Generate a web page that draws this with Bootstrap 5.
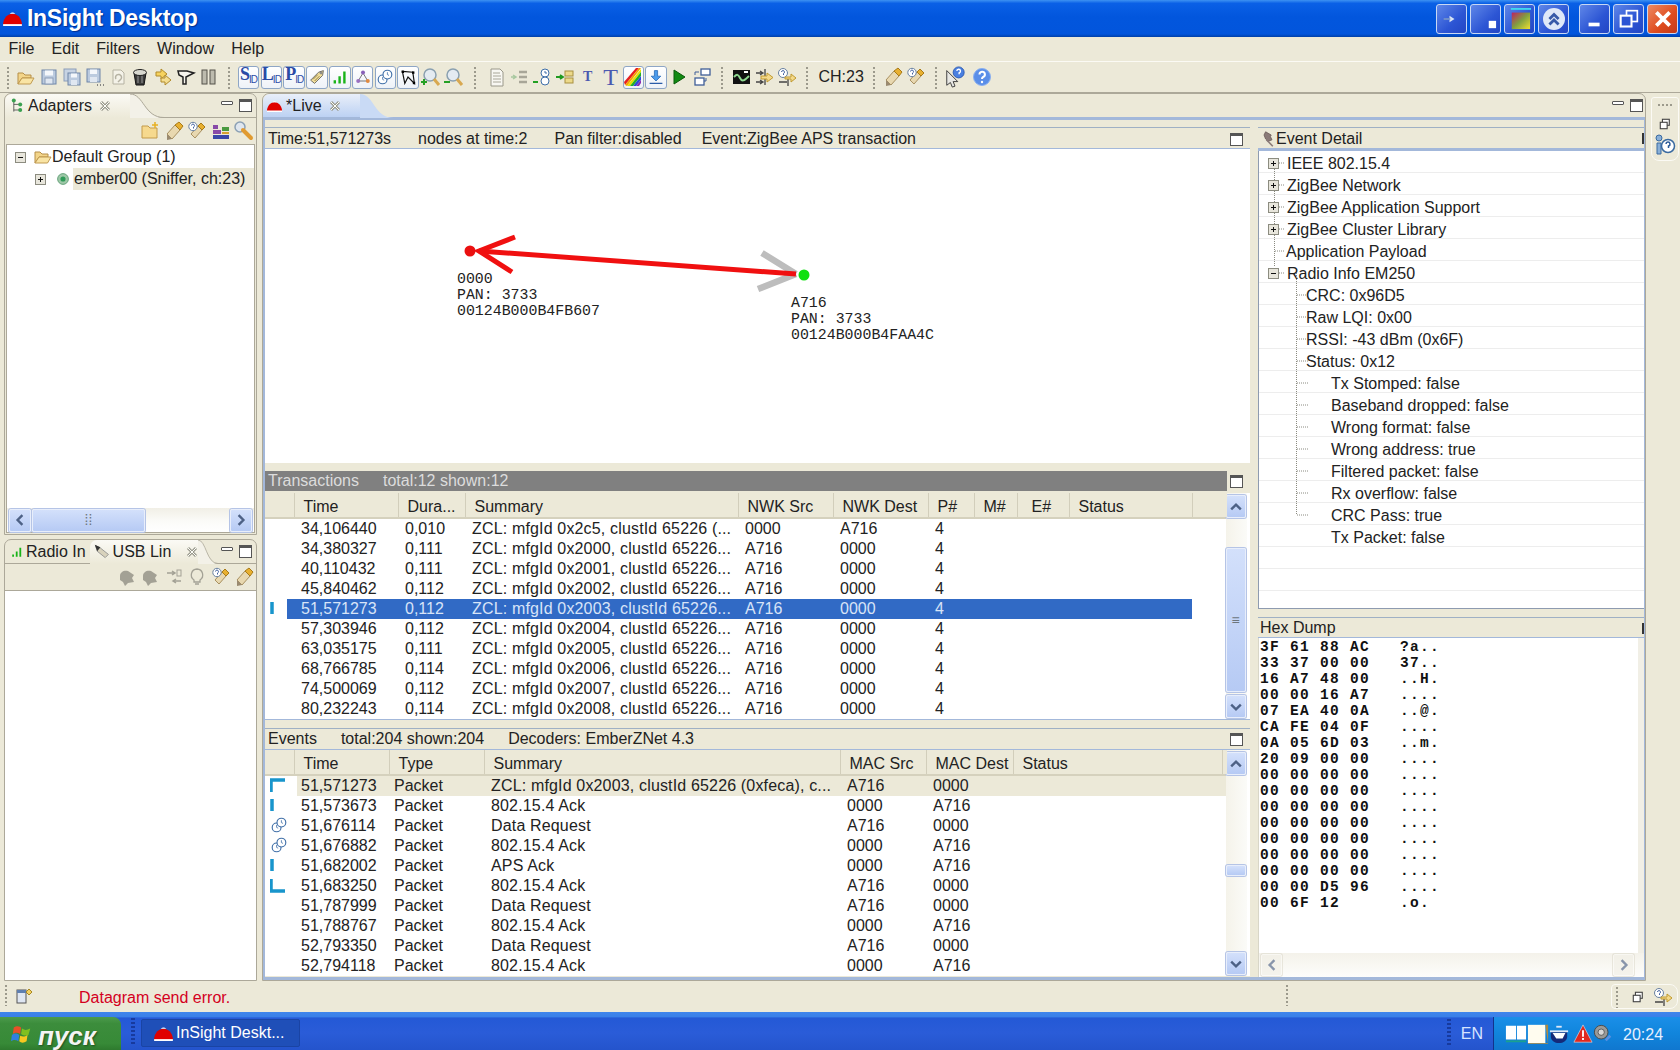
<!DOCTYPE html>
<html lang="en">
<head>
<meta charset="utf-8">
<title>InSight Desktop</title>
<link rel="stylesheet" href="https://cdn.jsdelivr.net/npm/bootstrap@5.3.0/dist/css/bootstrap.min.css">
<style>
html,body{height:100%;margin:0;overflow:hidden}
body{font-family:"Liberation Sans",Arial,sans-serif;font-size:16px;line-height:20px;color:#222;background:#ece9d8}
.desk{width:1680px;height:1050px}
.ic{width:20px;height:20px;flex:none;display:block}
.ic16{width:16px;height:16px;flex:none;display:block}
.ic12{width:12px;height:12px;flex:none;display:block}
/* title */
.tbar{height:37px;background:linear-gradient(180deg,#3d92f2 0,#0a60e6 9%,#0256dd 45%,#0255dc 92%,#0040a8 100%);color:#fff;padding-left:2px}
.tbar-t{font-size:23px;font-weight:700;letter-spacing:-.3px;margin-left:4px;text-shadow:1px 1px 1px #02308f;line-height:37px}
.wbtns{gap:3px;padding-right:2px}
.wbtn{width:31px;height:30px;border:1px solid #c8d8f4;border-radius:3px;background:linear-gradient(135deg,#5f87e8,#2c55d4 60%,#2346c4);display:flex;align-items:center;justify-content:center}
.wbtn-x{background:linear-gradient(135deg,#ee8a62,#de4b1e 60%,#c2391a)}
.wgap{margin-left:7px}
/* menu */
.mbar{height:24px;padding-top:2px}
.mbar .nav-link{color:#222;padding:0 8.6px;line-height:20px}
/* toolbar */
.tool{height:32px;border-top:1px solid #fbfaf4;border-bottom:1px solid #aca899}
.tb-i{width:22.8px;height:30px;display:flex;align-items:center;justify-content:center;flex:none}
.tb-box{width:21.5px;height:23px;border:1px solid #8ea6c6;border-radius:3px;background:linear-gradient(#fff,#eef2f8);display:flex;align-items:center;justify-content:center;overflow:hidden}
.box-s{font-family:"Liberation Serif",serif;font-weight:700;color:#2b4ba6;font-size:18px;line-height:18px;letter-spacing:-1px}
.box-s small{font-size:10px;font-family:"Liberation Sans",sans-serif;font-weight:400;vertical-align:-3px}
.gr{width:17px;height:24px;flex:none;background:linear-gradient(#9c9a8c 50%,transparent 50%) center/2px 4px repeat-y}
.gr20{width:20px}.gr16{width:16px}.gr15{width:15px}
.ch-t{width:51px;padding-left:4px;flex:none}
.t-big{font-family:"Liberation Serif",serif;color:#4a5ab0}
/* main */
.mainb{height:888px;padding:0 1px 0 4px;gap:5px}
.lcol{width:253px;gap:4px;flex:none}
.pn{height:442px;border:1px solid #aca899;border-radius:7px 7px 0 0}
.pn-h{height:24px;border-bottom:1px solid #aca899;flex:none}
.tab-a{background:linear-gradient(#fbfaf5,#ece9d8);border-radius:7px 0 0 0;height:24px;margin-bottom:-1px;padding-left:4px;gap:3px;flex:none;position:relative;white-space:nowrap}
.tab-c{width:34px;height:24px;flex:none;display:block;margin-bottom:-1px}
.tab-n{width:20px}
.cx{width:12px;height:12px;flex:none;display:block}
.mm{gap:6px;padding-right:4px}
.mm2{padding-right:2px}
.mn{width:12px;height:4px;border:1px solid #555;background:#fff;border-radius:1px;margin-top:-6px;display:block}
.mx{width:13px;height:13px;border:1px solid #555;border-top-width:3px;background:#fff;display:block}
.pn-t{height:26px;flex:none;padding-right:2px;gap:3.5px}
.pn-t.bord{border-bottom:1px solid #aca899;height:27px}
.pn-b{background:#fff;border:1px solid #aca899;margin:0 1px 1px;flex:1 1 auto;min-height:0}
.pn-b2{background:#fff;flex:1 1 auto}
.tr-r{height:22px;white-space:nowrap}
.exp{width:11px;height:11px;display:block;flex:none}
.hl{background:#ece9d8;padding:1px 3px 1px 1px;height:22px;margin-left:4px}
.tree-l{padding-top:1px}
.dot-m{margin-left:11px}
.hsb{height:24px;background:linear-gradient(#f1efe6,#fbfbf8 55%,#fff);padding:0 2px;flex:none}
.sb-b{background:linear-gradient(#d3e0fb,#b6caf4);border:1px solid #e8eefb;border-radius:2px;display:flex;align-items:center;justify-content:center;flex:none;box-shadow:0 0 0 1px #b5c4e6}
.sb-off{background:#f1efe6;box-shadow:0 0 0 1px #e0ddd0;border-color:#fbfaf6;opacity:.65}
.sb-lh{width:22px;height:23px}
.hthumb{width:113px;height:23px;margin-left:1px}
.radio-t{gap:3px;padding-left:6px;white-space:nowrap;flex:none}
.usb-x{margin-left:12px}
/* centre */
.cpan{width:1386px;border:1px solid #aca899;border-radius:7px 7px 0 0;height:888px}
.cpan-h{height:26px;border-bottom:3px solid #a3b8da;flex:none}
.live{background:linear-gradient(#e9eff9,#bcd1f3);height:23px;padding-left:3px;gap:3px;border-radius:7px 0 0 0;flex:none;white-space:nowrap}
.cpan-b{flex:1 1 auto;min-height:0;border-left:2px solid #a3b8da;border-right:1px solid #a3b8da;border-bottom:3px solid #a3b8da;padding:7px 0 0 0;gap:8px}
.col-m{width:985px;flex:none}
.col-r{flex:1 1 auto;min-width:0}
.bar{height:22px;border-top:1px solid #9fb0c4;border-bottom:1px solid #a3b8da;padding-left:3px;gap:24px;flex:none;white-space:nowrap}
.bar.dn{padding-top:2px;gap:27px}
.bar.dn .lastm{margin-left:-7px}
.bar .mx{margin-right:7px;margin-left:auto}
.canv{height:314px;background:#fff;flex:none}
.canv svg{display:block}
.sash{height:8px;flex:none}
.dbar{height:20px;flex:none;margin:0 0 2px}
.dbar .mx{margin-right:7px;margin-left:auto}
.dark-t{background:#808080;color:#dcdcdc;width:962px;height:20px;padding-left:3px;white-space:nowrap}
.dark-t span+span{margin-left:24px}
.gridw{background:#fff;border-bottom:1px solid #a3b8da;flex:none;padding-right:5px}
.gt{table-layout:fixed;margin:0;--bs-table-bg:transparent;--bs-table-color:#222;width:962px;flex:none}
.gt>:not(caption)>*>*{padding:0 0 0 7px;height:20px;line-height:20px;white-space:nowrap;overflow:hidden;font-weight:400;vertical-align:middle;box-shadow:none;border:0}
.gt thead>tr>th{height:25px;background:#ece9d8;padding:3px 0 0 9px;position:relative;border-bottom:2px solid #d5d1bd;border-right:1px solid #d2cebb}
.gt thead>tr>th.tight{padding-left:0;border-right:1px solid #d2cebb}
.gt thead>tr>th.far{padding-left:14px}
.gt .sel>td:not(:first-child){background:#316ac5;color:#d8e4f8}
.gt .sel>td.clr{background:#fff}
.gt .hi>td:not(:first-child){background:#ece9d8}
.gt .hi>td.tm{background:linear-gradient(90deg,#fff 10px,#ece9d8 10px)}
.gt td.tm{padding-left:14px}
.gt td.mk{padding:0;overflow:visible}
.gt tbody td:nth-child(4){letter-spacing:.16px}
.gt td.nar{padding-left:5px}
.mk-i{width:16px;height:20px;margin-left:5px;display:block}
.mk-l{width:16px;height:16px;margin:0 0 3px 6px;display:block}
.vsb{width:21px;flex:none;background:linear-gradient(90deg,#f5f3ea,#fbfbf8);margin-left:-2px}
.vsb-up{width:20px;height:23px;margin:2px 0 0 0}
.vsb-dn{width:20px;height:23px;margin-top:auto;margin-bottom:1px}
.vth{width:20px;height:144px;margin-top:30px}
.vth2{width:20px;height:11px;margin-top:90px}
/* detail */
.dt-h{height:24px;border-top:1px solid #9fb0c4;border-bottom:3px solid #a3b8da;background:#ece9d8;flex:none;padding:2px 0 0 2px;position:relative}
.tick{position:absolute;right:0;top:5px;width:2px;height:11px;background:#333}
.dt-list{height:458px;background:#fff;overflow:hidden;position:relative;border-left:1px solid #8e9bb0;flex:none;border-bottom:1px solid #8e9bb0}
.dt-r{height:22px;border-bottom:1px solid #ededed;white-space:nowrap;line-height:21px;display:flex;align-items:center;padding-top:3px}
.l1{padding-left:27px}.l1x{padding-left:9px}.l2{padding-left:47px}.l3{padding-left:72px}
.dt-lines{position:absolute;left:0;top:0;pointer-events:none}
.hex-h{height:21px;border-top:1px solid #9fb0c4;border-bottom:1px solid #a3b8da;padding-left:2px;position:relative;flex:none;background:#ece9d8}
.hex-b{background:#fff;flex:1 1 auto;min-height:0;border-left:1px solid #d8d6c8;position:relative}
.hex{font-family:"Liberation Mono","Courier New",monospace;font-weight:700;font-size:14.5px;letter-spacing:1.3px;line-height:16px;margin:0;padding:1px 0 0 1px;color:#111;overflow:hidden;height:330px}
.hex-vs{width:6px;flex:none;background:#f1efe6}
.hs2{height:24px;background:linear-gradient(#f4f2ea,#fdfdfb);padding:0 10px 1px 2px;flex:none}
.hs2 .sb-b{width:21px;height:22px}
/* trim */
.trim{width:28px;height:64px;margin-top:4px;border:1px solid #fbfaf4;border-radius:3px 3px 8px 8px;gap:4px;padding-top:6px;flex:none}
.dots{width:14px;height:2px;background:linear-gradient(90deg,#9c9a8c 50%,transparent 50%) 0 0/4px 2px repeat-x}
/* status */
.stat{height:31px;padding:3px 2px 0 4px}
.stat .gr{height:22px;width:4px}
.err{color:#d4001e;margin:4px 0 0 47px;width:1206px;flex:none;white-space:nowrap}
.trim2{width:67px;height:25px;border:1px solid #fbfaf4;border-radius:4px 8px 8px 4px;margin-left:auto;padding-left:3px;gap:9px}
/* task */
.task{height:38px;background:linear-gradient(180deg,#3f85ec 0,#3a80e8 12%,#2459d6 16%,#2a5cd8 55%,#2454cc 100%);color:#fff;position:relative}
.start{width:121px;height:33px;margin-top:5px;background:linear-gradient(#4c9b4c,#3c8d3c 20%,#378a37 80%,#2e7a2e);border-radius:0 8px 0 0;padding-left:11px;gap:5px}
.start-t{font-size:26px;font-weight:700;font-style:italic;color:#f4f4f4;text-shadow:1px 1px 2px #1f4f1f;line-height:30px;margin-top:4px}
.tgrip{width:5px;height:28px;margin:6px 0 0 10px;background:linear-gradient(#173a9e 50%,transparent 50%) 0 0/4px 4px repeat-y;flex:none}
.tbtn{width:159px;height:28px;margin:7px 0 0 5px;background:#1f4fb8;border-radius:2px;border:1px solid #1a44a4;padding-left:11px;gap:2px;white-space:nowrap}
.tgrip2{width:4px;height:28px;margin:7px 10px 0 auto;background:linear-gradient(#173a9e 50%,transparent 50%) 0 0/4px 4px repeat-y;flex:none}
.lang{margin:12px 10px 0 0;color:#d6e4ff}
.tray{width:187px;height:33px;margin-top:5px;background:linear-gradient(#1a8fe8,#1185dc 50%,#1077cf);border-left:1px solid #12338c;padding-left:11px}
.clk{margin-left:10px;color:#e6f0ff;margin-top:2px}
.tr22{width:22px;height:22px;flex:none;display:block}
.tr20{width:20px;height:20px;flex:none;display:block}
.dome-l{width:21px;height:15px;flex:none;display:block}
.dome-s{width:17px;height:12px;flex:none;display:block}
</style>
</head>
<body>
<svg width="0" height="0" class="position-absolute" aria-hidden="true">
<defs>
<symbol id="dome" viewBox="0 0 22 16"><path d="M1 15h20v-2C20 7 16 3 11 3S2 7 1 13z" fill="#e00000"/><path d="M1 15h20" stroke="#fff" stroke-width="2"/><path d="M8 3a4 3 0 0 1 6 0" fill="#fff"/></symbol>
<symbol id="open" viewBox="0 0 20 20"><path d="M2 6h5l2 2h6v3H6l-4 6z" fill="#f3d58a" stroke="#b68f48"/><path d="M6 11h12l-3.500 6H2z" fill="#f9e4a4" stroke="#c09a50"/></symbol>
<symbol id="save" viewBox="0 0 20 20"><rect x="3" y="3" width="14" height="14" fill="#bccbdf" stroke="#6f86a8"/><rect x="6" y="3.500" width="8" height="5" fill="#f4f7fb"/><rect x="6" y="11" width="8" height="6" fill="#e0e7f1" stroke="#8b9db8"/></symbol>
<symbol id="saveall" viewBox="0 0 20 20"><rect x="2" y="2" width="12" height="12" fill="#c7d3e3" stroke="#8b9db8"/><rect x="6" y="6" width="12" height="12" fill="#bccbdf" stroke="#6f86a8"/><rect x="9" y="6.500" width="6" height="4" fill="#f4f7fb"/><rect x="9" y="13" width="6" height="5" fill="#e0e7f1"/></symbol>
<symbol id="saveas" viewBox="0 0 20 20"><rect x="2" y="2" width="13" height="13" fill="#bccbdf" stroke="#6f86a8"/><rect x="5" y="2.500" width="7" height="4.500" fill="#f4f7fb"/><rect x="5" y="10" width="7" height="5" fill="#e0e7f1"/><path d="M12 18h1M15 18h1M18 18h1" stroke="#666" stroke-width="1.500"/></symbol>
<symbol id="copyoff" viewBox="0 0 20 20"><path d="M5 3h8l3 3v11H5z" fill="#f4f2e8" stroke="#b5b2a2"/><path d="M8 12a3 3 0 1 1 4 1l-2 2" fill="none" stroke="#b5b2a2" stroke-width="1.500"/></symbol>
<symbol id="bucket" viewBox="0 0 20 20"><path d="M4 6l2 12h8l2-12z" fill="#3c3c3c" stroke="#111"/><ellipse cx="10" cy="5.500" rx="6.500" ry="3" fill="#d8d8d0" stroke="#222"/><path d="M8 9v7M12 9v7" stroke="#9a9a9a"/></symbol>
<symbol id="fwd" viewBox="0 0 20 20"><path d="M3 5h5V2l6 5-6 5V9H3z" fill="#f6d25e" stroke="#b08a2a"/><path d="M8 11h4V8l6 5-6 5v-3H8z" fill="#f4dd90" stroke="#b08a2a"/></symbol>
<symbol id="key" viewBox="0 0 20 20"><path d="M2 4h9l7 2-6 3-2 1v7H7v-7L3 8z" fill="#f7f5ee" stroke="#222" stroke-width="1.500"/></symbol>
<symbol id="pause" viewBox="0 0 20 20"><rect x="3" y="3" width="5" height="14" fill="#bdbbae" stroke="#55534a"/><rect x="11" y="3" width="5" height="14" fill="#bdbbae" stroke="#55534a"/></symbol>
<symbol id="tag" viewBox="0 0 20 20"><path d="M2 14L12 4l6-2-1 6-10 10z" fill="#f2df9c" stroke="#555"/><path d="M5 13l6-6M7 15l6-6" stroke="#7a6a30"/><circle cx="15" cy="5" r="1.200" fill="#fff" stroke="#555"/></symbol>
<symbol id="bars" viewBox="0 0 20 20"><path d="M2 14h3v4H2zM8 9h3v9H8zM14 3h3v15h-3z" fill="#19b319"/></symbol>
<symbol id="nodes" viewBox="0 0 20 20"><path d="M10 5L4 15h12z" fill="none" stroke="#555"/><circle cx="10" cy="4.500" r="2.500" fill="#8860b8"/><circle cx="4" cy="15" r="2.500" fill="#9a70c0"/><circle cx="16" cy="15" r="2.500" fill="#e08a40"/></symbol>
<symbol id="link" viewBox="0 0 20 20"><circle cx="7" cy="13" r="5.500" fill="#fff" stroke="#3f6fa8" stroke-width="1.400"/><circle cx="13" cy="7" r="5.500" fill="#fff" stroke="#3f6fa8" stroke-width="1.400"/><path d="M13 4v3l2 1M7 10v3l2 1" fill="none" stroke="#3f6fa8"/></symbol>
<symbol id="poly" viewBox="0 0 20 20"><path d="M3 3l13 1 2 14-8-8-4 8z" fill="none" stroke="#111" stroke-width="1.500"/><rect x="2" y="2" width="3" height="3"/><rect x="15" y="3" width="3" height="3"/><rect x="16" y="16" width="3" height="3"/></symbol>
<symbol id="zoomp" viewBox="0 0 20 20"><circle cx="9" cy="8" r="6" fill="#e4ebf2" stroke="#8aa0b0" stroke-width="1.500"/><path d="M13 12l5 6" stroke="#d8a850" stroke-width="3"/><path d="M3 12v6M0 15h6" stroke="#25a025" stroke-width="2"/></symbol>
<symbol id="zoomm" viewBox="0 0 20 20"><circle cx="9" cy="8" r="6" fill="#e4ebf2" stroke="#8aa0b0" stroke-width="1.500"/><path d="M13 12l5 6" stroke="#d8a850" stroke-width="3"/><path d="M0 15h6" stroke="#25a025" stroke-width="2"/></symbol>
<symbol id="doc" viewBox="0 0 20 20"><path d="M4 2h9l3 3v14H4z" fill="#f8f7f2" stroke="#9a988a"/><path d="M6 6h7M6 9h8M6 12h8M6 15h8" stroke="#a8a698"/></symbol>
<symbol id="list" viewBox="0 0 20 20"><path d="M2 10h4M4 8l3 2-3 2" fill="none" stroke="#a8c8a0" stroke-width="1.500"/><path d="M10 5h8M10 10h8M10 15h8" stroke="#a8a698" stroke-width="2.500"/></symbol>
<symbol id="clock" viewBox="0 0 20 20"><path d="M1 15h5" stroke="#22a022" stroke-width="2"/><circle cx="13" cy="6" r="4" fill="#fff" stroke="#3f6fa8"/><circle cx="13" cy="14" r="4" fill="#fff" stroke="#3f6fa8"/><path d="M13 4v2h2" fill="none" stroke="#3f6fa8"/></symbol>
<symbol id="move" viewBox="0 0 20 20"><path d="M1 10h6M5 8l3 2-3 2" fill="none" stroke="#1f9a1f" stroke-width="1.800"/><rect x="10" y="4" width="8" height="5" fill="#ecd98a" stroke="#a89040"/><rect x="10" y="11" width="8" height="5" fill="#ecd98a" stroke="#a89040"/></symbol>
<symbol id="rb" viewBox="0 0 20 20"><path d="M1 15L13 1h3L2 18z" fill="#e52020"/><path d="M2 18L16 1h2L4 19z" fill="#f5a000"/><path d="M4 19L18 2v3L7 19z" fill="#e4e000"/><path d="M7 19L18 5v4L10 19z" fill="#22b022"/><path d="M10 19l8-10v4l-5 6z" fill="#2a4ad8"/><path d="M13 19l5-6v3l-2 3z" fill="#8a2ab0"/></symbol>
<symbol id="dl" viewBox="0 0 20 20"><path d="M8 2h4v7h4l-6 6-6-6h4z" fill="#4a9bec" stroke="#2a6cb8"/><path d="M2 18h16" stroke="#2a5ca8" stroke-width="1.500"/></symbol>
<symbol id="play" viewBox="0 0 20 20"><path d="M5 3l11 7-11 7z" fill="#128a12" stroke="#0a5a0a"/></symbol>
<symbol id="lay" viewBox="0 0 20 20"><rect x="9" y="2" width="9" height="6" fill="#fff" stroke="#3f5f98" stroke-width="1.300"/><rect x="3" y="11" width="9" height="7" fill="#fff" stroke="#3f5f98" stroke-width="1.300"/><path d="M3 8V5h4M12 14h2v-3" fill="none" stroke="#3f5f98"/></symbol>
<symbol id="wave" viewBox="0 0 20 20"><rect x="1" y="3" width="17" height="14" fill="#111"/><path d="M2 10c3-3 4-3 6 1s4 3 9-2" fill="none" stroke="#8ed88e" stroke-width="2"/><rect x="12" y="4" width="4" height="2" fill="#fff"/></symbol>
<symbol id="stp" viewBox="0 0 20 20"><path d="M2 6h7M6 4l3 2-3 2M2 15h7M6 13l3 2-3 2" fill="none" stroke="#444" stroke-width="1.300"/><path d="M11 2v16" stroke="#444" stroke-width="1.300"/><path d="M7 9h6V6l6 4.500-6 4.500v-3H7z" fill="#f4d98a" stroke="#c09a30"/></symbol>
<symbol id="stq" viewBox="0 0 20 20"><circle cx="6" cy="6" r="4.500" fill="#fff" stroke="#6880a0"/><path d="M4.500 5a1.500 1.500 0 1 1 2 1.500V8" fill="none" stroke="#4060a0"/><path d="M2 15h8M11 11v8" stroke="#444" stroke-width="1.300"/><path d="M8 10h6V7l5 4-5 4v-3H8z" fill="#f4d98a" stroke="#c09a30"/></symbol>
<symbol id="pen" viewBox="0 0 20 20"><path d="M3 13l8-9 5 5-8 9z" fill="#e8d8b0" stroke="#a89060"/><path d="M11 4l4-3 4 4-3 4z" fill="#e8b030" stroke="#a87a18"/><path d="M3 13l5 5-5 1z" fill="#9a8a70"/></symbol>
<symbol id="penq" viewBox="0 0 20 20"><path d="M4 13l7-8 4 4-7 8z" fill="#e8d8b0" stroke="#a89060"/><path d="M11 5l3-3 4 4-3 3z" fill="#e8b030" stroke="#a87a18"/><circle cx="6" cy="5.500" r="4.200" fill="#fff" stroke="#6880a0"/><path d="M4.500 4.500a1.500 1.500 0 1 1 2 1.500v1.500" fill="none" stroke="#4060a0"/></symbol>
<symbol id="curq" viewBox="0 0 24 24"><path d="M3 5v16l4-3 2 5 3-1-2-5h5z" fill="#e8e8e4" stroke="#333"/><circle cx="16" cy="7" r="6" fill="#4a80e0" stroke="#2a58b0"/><path d="M14 5.500a2 2 0 1 1 2.500 2V9" fill="none" stroke="#fff" stroke-width="1.500"/></symbol>
<symbol id="hlp" viewBox="0 0 20 20"><circle cx="10" cy="10" r="8.500" fill="#5a8ee8" stroke="#8ab0f0"/><path d="M7.500 7.500a2.700 2.700 0 1 1 3.600 2.500c-.8.4-1.100.8-1.100 2" fill="none" stroke="#fff" stroke-width="2"/><circle cx="10" cy="15" r="1.200" fill="#fff"/></symbol>
<symbol id="fnew" viewBox="0 0 20 20"><path d="M2 5h6l2 2h7v10H2z" fill="#f6d98e" stroke="#c39a4a"/><path d="M15 1v6M12 4h6" stroke="#e8b020" stroke-width="1.500"/></symbol>
<symbol id="stack" viewBox="0 0 20 20"><path d="M2 4h5v4H2z" fill="#884aa8"/><path d="M2 9h8v4H2z" fill="#884aa8"/><path d="M11 6h7v4h-7z" fill="#4a9a40"/><path d="M2 14h16v4H2z" fill="#3a48a8"/><path d="M11 11h7v2h-7z" fill="#d8a030"/></symbol>
<symbol id="wr" viewBox="0 0 20 20"><circle cx="6" cy="6" r="5" fill="#dfe6ee" stroke="#8ba0b4" stroke-width="1.500"/><path d="M9 9l8 8" stroke="#e09a30" stroke-width="4" stroke-linecap="round"/></symbol>
<symbol id="adp" viewBox="0 0 14 20"><path d="M3 3v14M3 8h8M3 15h8" stroke="#444" fill="none"/><circle cx="3" cy="3" r="2.500" fill="#3aa050"/><circle cx="11" cy="8" r="2.500" fill="#3aa050"/><circle cx="11" cy="15" r="2.500" fill="#3aa050"/></symbol>
<symbol id="cl" viewBox="0 0 12 12"><path d="M2 2l8 8M10 2l-8 8" stroke="#9a9a8e" stroke-width="3"/><path d="M2 2l8 8M10 2l-8 8" stroke="#fdfdf8" stroke-width="1"/></symbol>
<symbol id="fld" viewBox="0 0 18 16"><path d="M1 3h5l2 2h6v3H5l-4 6z" fill="#f3d58a" stroke="#b68f48"/><path d="M5 8h12l-3.500 6H1z" fill="#f9e4a4" stroke="#c09a50"/></symbol>
<symbol id="pl" viewBox="0 0 11 11"><rect x=".5" y=".5" width="10" height="10" fill="#e8e6dc" stroke="#8c8c80"/><path d="M3 5.500h5M5.500 3v5" stroke="#111"/></symbol>
<symbol id="mi" viewBox="0 0 11 11"><rect x=".5" y=".5" width="10" height="10" fill="#e8e6dc" stroke="#8c8c80"/><path d="M3 5.500h5" stroke="#111"/></symbol>
<symbol id="lft" viewBox="0 0 10 10"><path d="M7 1L3 5l4 4" fill="none" stroke="#4d6185" stroke-width="2"/></symbol>
<symbol id="rgt" viewBox="0 0 10 10"><path d="M3 1l4 4-4 4" fill="none" stroke="#4d6185" stroke-width="2"/></symbol>
<symbol id="upa" viewBox="0 0 10 10"><path d="M1 7l4-4 4 4" fill="none" stroke="#4d6185" stroke-width="2"/></symbol>
<symbol id="dna" viewBox="0 0 10 10"><path d="M1 3l4 4 4-4" fill="none" stroke="#4d6185" stroke-width="2"/></symbol>
<symbol id="usb" viewBox="0 0 20 20"><path d="M2 2l6 3 10 8-4 4L4 9z" fill="#d8d2bc" stroke="#888"/><path d="M1 1l7 3-4 5z" fill="#333"/></symbol>
<symbol id="gbug" viewBox="0 0 20 20"><path d="M3 9c0-4 4-6 8-5l6 4-2 3 2 4-6 1-3 3-2-4-3-2z" fill="#a3a195"/></symbol>
<symbol id="gsw" viewBox="0 0 20 20"><path d="M3 6h8M8 4l3 2-3 2M17 14H9M12 12l-3 2 3 2" fill="none" stroke="#a3a195" stroke-width="1.500"/><rect x="13" y="3" width="4" height="6" fill="none" stroke="#a3a195"/></symbol>
<symbol id="bulb" viewBox="0 0 20 20"><path d="M10 2a6 6 0 0 0-3 11v2h6v-2a6 6 0 0 0-3-11zM8 17h4" fill="none" stroke="#a3a195" stroke-width="1.300"/></symbol>
<symbol id="pin" viewBox="0 0 20 20"><path d="M7 1l7 4-1 2 2 4-5 2-3-3-2-5z" fill="#8a7a78" stroke="#6a5a58"/><path d="M8 11l8 8" stroke="#8a7a78" stroke-width="2"/></symbol>
<symbol id="rst" viewBox="0 0 14 14"><rect x="4" y="1.500" width="8" height="7" fill="#fff" stroke="#444" stroke-width="1.300"/><rect x="1.500" y="5" width="8" height="7.500" fill="#fff" stroke="#444" stroke-width="1.300"/></symbol>
<symbol id="info" viewBox="0 0 22 22"><circle cx="5" cy="4" r="3" fill="#8ab0d8" stroke="#3a6aa0"/><path d="M3 9h4v11H3z" fill="#8ab0d8" stroke="#3a6aa0"/><circle cx="14" cy="12" r="6.500" fill="#fff" stroke="#3a6aa0" stroke-width="1.500"/><path d="M12 10a2 2 0 1 1 2.500 2v2" fill="none" stroke="#2a5a98" stroke-width="1.500"/></symbol>
<symbol id="fv" viewBox="0 0 16 16"><rect x="1" y="2" width="9" height="13" fill="#dfe6f2" stroke="#555"/><rect x="1" y="2" width="9" height="3" fill="#5f7fb0"/><path d="M13 1l3 3-3 3-3-3z" fill="#f4d060" stroke="#a88820"/></symbol>
<symbol id="flag" viewBox="0 0 24 24"><path d="M3 5c3-2 5-2 8 0l-1 7c-3-2-5-2-8 0z" fill="#e85028"/><path d="M12 6c3 2 5 2 9 0l-2 7c-3 1-5 1-8-1z" fill="#80c020"/><path d="M1 13c3-2 5-2 8 0l-1 7c-3-2-5-2-8 0z" fill="#3080e0"/><path d="M10 14c3 1 5 1 8-1l-1 7c-3 2-6 2-8 0z" fill="#f8c820"/></symbol>
<symbol id="book" viewBox="0 0 24 20"><path d="M1 1h11v15H1zM13 1h10v15H13z" fill="#fff"/><path d="M1 18h22" stroke="#1aa090" stroke-width="2"/></symbol>
<symbol id="note" viewBox="0 0 24 24"><rect x="1" y="2" width="19" height="20" fill="#fffcef"/><path d="M20 2h3v20H1v1h22z" fill="#b08a40"/></symbol>
<symbol id="mask" viewBox="0 0 22 22"><path d="M2 9h18v5c0 4-4 7-9 7s-9-3-9-7z" fill="#152a78"/><path d="M4 10h14l-3 6H8z" fill="#fff"/><rect x="8" y="2" width="6" height="2" fill="#dfe8f8"/><rect x="1" y="7" width="20" height="2" fill="#dfe8f8"/></symbol>
<symbol id="warn" viewBox="0 0 22 22"><path d="M11 1l10 19H1z" fill="#e0281e" stroke="#f4f4f4" stroke-width=".6"/><path d="M10 7h2v7h-2zM10 15.500h2v2h-2z" fill="#fff"/></symbol>
<symbol id="spk" viewBox="0 0 22 22"><circle cx="9" cy="9" r="7.500" fill="#9a9a98" stroke="#444"/><circle cx="9" cy="9" r="3.500" fill="#d8d8d8" stroke="#555"/><path d="M14 18l5-5" stroke="#5a90e0" stroke-width="3"/></symbol>
<symbol id="bTop" viewBox="0 0 16 20"><path d="M1 16V4h14" fill="none" stroke="#1895cc" stroke-width="3.500"/></symbol>
<symbol id="bMid" viewBox="0 0 16 20"><path d="M2 3v12" fill="none" stroke="#1895cc" stroke-width="3.500"/></symbol>
<symbol id="bBot" viewBox="0 0 16 20"><path d="M1 3v12h14" fill="none" stroke="#1895cc" stroke-width="3.500"/></symbol>
<symbol id="wtoc" viewBox="0 0 24 24"><path d="M9 8l6 4-6 4zM15 8v8" fill="#d8e4f4"/><path d="M2 12h8" stroke="#7896c8" stroke-width="2"/></symbol>
<symbol id="wsq" viewBox="0 0 24 24"><rect x="15" y="14" width="8" height="8" fill="#fff"/></symbol>
<symbol id="wcol" viewBox="0 0 24 24"><defs><linearGradient id="gc" x1="0" y1="0" x2="1" y2="1"><stop offset="0" stop-color="#c02060"/><stop offset=".5" stop-color="#80a040"/><stop offset="1" stop-color="#f0e030"/></linearGradient></defs><rect x="2" y="0" width="22" height="2" fill="#40d8f0"/><rect x="3" y="5" width="20" height="18" fill="url(#gc)"/></symbol>
<symbol id="wup" viewBox="0 0 24 24"><circle cx="12" cy="12" r="12" fill="#dfe8f8"/><path d="M7 12l5-5 5 5M7 18l5-5 5 5" fill="none" stroke="#385aa8" stroke-width="3"/></symbol>
<symbol id="wmin" viewBox="0 0 24 24"><rect x="5" y="16" width="12" height="4" fill="#fff"/></symbol>
<symbol id="wmax" viewBox="0 0 24 24"><rect x="9" y="2" width="13" height="13" fill="none" stroke="#fff" stroke-width="2"/><rect x="2" y="8" width="13" height="13" fill="#2c55d4" stroke="#fff" stroke-width="2.500"/></symbol>
<symbol id="wx" viewBox="0 0 24 24"><path d="M4 4l16 16M20 4L4 20" stroke="#fff" stroke-width="4.500"/></symbol>
</defs>
</svg>

<div class="desk d-flex flex-column">
  <!-- title bar -->
  <div class="tbar d-flex align-items-center justify-content-between">
    <div class="d-flex align-items-center"><svg class="dome-l"><use href="#dome"/></svg><span class="tbar-t">InSight Desktop</span></div>
    <div class="wbtns d-flex">
      <div class="wbtn"><svg class="ic"><use href="#wtoc"/></svg></div>
      <div class="wbtn"><svg class="tr22"><use href="#wsq"/></svg></div>
      <div class="wbtn"><svg class="tr22"><use href="#wcol"/></svg></div>
      <div class="wbtn"><svg class="tr22"><use href="#wup"/></svg></div>
      <div class="wbtn wgap"><svg class="tr22"><use href="#wmin"/></svg></div>
      <div class="wbtn"><svg class="ic"><use href="#wmax"/></svg></div>
      <div class="wbtn wbtn-x"><svg class="ic"><use href="#wx"/></svg></div>
    </div>
  </div>
  <!-- menu -->
  <nav class="nav mbar flex-nowrap">
    <a class="nav-link" href="#">File</a><a class="nav-link" href="#">Edit</a><a class="nav-link" href="#">Filters</a><a class="nav-link" href="#">Window</a><a class="nav-link" href="#">Help</a>
  </nav>
  <!-- toolbar -->
  <div class="tool d-flex align-items-center">
    <div class="gr gr15"></div>
    <div class="tb-i"><svg class="ic"><use href="#open"/></svg></div>
    <div class="tb-i"><svg class="ic"><use href="#save"/></svg></div>
    <div class="tb-i"><svg class="ic"><use href="#saveall"/></svg></div>
    <div class="tb-i"><svg class="ic"><use href="#saveas"/></svg></div>
    <div class="tb-i"><svg class="ic"><use href="#copyoff"/></svg></div>
    <div class="tb-i"><svg class="ic"><use href="#bucket"/></svg></div>
    <div class="tb-i"><svg class="ic"><use href="#fwd"/></svg></div>
    <div class="tb-i"><svg class="ic"><use href="#key"/></svg></div>
    <div class="tb-i"><svg class="ic"><use href="#pause"/></svg></div>
    <div class="gr"></div>
    <div class="tb-i"><div class="tb-box"><span class="box-s">S<small>ID</small></span></div></div>
    <div class="tb-i"><div class="tb-box"><span class="box-s">L<small>ID</small></span></div></div>
    <div class="tb-i"><div class="tb-box"><span class="box-s">P<small>ID</small></span></div></div>
    <div class="tb-i"><div class="tb-box"><svg class="ic16"><use href="#tag"/></svg></div></div>
    <div class="tb-i"><div class="tb-box"><svg class="ic16"><use href="#bars"/></svg></div></div>
    <div class="tb-i"><div class="tb-box"><svg class="ic16"><use href="#nodes"/></svg></div></div>
    <div class="tb-i"><div class="tb-box"><svg class="ic16"><use href="#link"/></svg></div></div>
    <div class="tb-i"><div class="tb-box"><svg class="ic16"><use href="#poly"/></svg></div></div>
    <div class="tb-i"><svg class="ic"><use href="#zoomp"/></svg></div>
    <div class="tb-i"><svg class="ic"><use href="#zoomm"/></svg></div>
    <div class="gr gr20"></div>
    <div class="tb-i"><svg class="ic"><use href="#doc"/></svg></div>
    <div class="tb-i"><svg class="ic"><use href="#list"/></svg></div>
    <div class="tb-i"><svg class="ic"><use href="#clock"/></svg></div>
    <div class="tb-i"><svg class="ic"><use href="#move"/></svg></div>
    <div class="tb-i"><span class="t-big fw-bold small">T</span></div>
    <div class="tb-i"><span class="t-big fs-4">T</span></div>
    <div class="tb-i"><div class="tb-box"><svg class="ic"><use href="#rb"/></svg></div></div>
    <div class="tb-i"><div class="tb-box"><svg class="ic16"><use href="#dl"/></svg></div></div>
    <div class="tb-i"><svg class="ic"><use href="#play"/></svg></div>
    <div class="tb-i"><svg class="ic"><use href="#lay"/></svg></div>
    <div class="gr"></div>
    <div class="tb-i"><svg class="ic"><use href="#wave"/></svg></div>
    <div class="tb-i"><svg class="ic"><use href="#stp"/></svg></div>
    <div class="tb-i"><svg class="ic"><use href="#stq"/></svg></div>
    <div class="gr gr16"></div>
    <div class="ch-t">CH:23</div>
    <div class="gr gr16"></div>
    <div class="tb-i"><svg class="ic"><use href="#pen"/></svg></div>
    <div class="tb-i"><svg class="ic"><use href="#penq"/></svg></div>
    <div class="gr"></div>
    <div class="tb-i"><svg class="tr22"><use href="#curq"/></svg></div>
    <div class="tb-i ms-1"><svg class="ic"><use href="#hlp"/></svg></div>
  </div>

  <!-- main -->
  <div class="mainb d-flex">
    <div class="lcol d-flex flex-column">
      <!-- adapters -->
      <section class="pn d-flex flex-column">
        <div class="pn-h d-flex justify-content-between">
          <div class="d-flex">
            <div class="tab-a d-flex align-items-center"><svg class="ic16"><use href="#adp"/></svg><span>Adapters</span><svg class="cx ms-1"><use href="#cl"/></svg><span class="ps-3"></span></div>
            <svg class="tab-c" viewBox="0 0 34 24"><path d="M0 0C14 0 14 24 34 24H0z" fill="#f3f1e8"/><path d="M0 0C14 0 14 23.500 34 23.500" fill="none" stroke="#aca899"/></svg>
          </div>
          <div class="mm d-flex align-items-center"><i class="mn"></i><i class="mx"></i></div>
        </div>
        <div class="pn-t d-flex align-items-center justify-content-end">
          <svg class="ic"><use href="#fnew"/></svg><svg class="ic"><use href="#pen"/></svg><svg class="ic"><use href="#penq"/></svg><svg class="ic"><use href="#stack"/></svg><svg class="ic"><use href="#wr"/></svg>
        </div>
        <div class="pn-b d-flex flex-column">
          <div class="flex-grow-1 tree-l">
            <div class="tr-r d-flex align-items-center"><svg class="exp ms-2"><use href="#mi"/></svg><svg class="ic16 ms-2" style="width:18px"><use href="#fld"/></svg><span class="ps-0">Default Group (1)</span></div>
            <div class="tr-r d-flex align-items-center"><svg class="exp" style="margin-left:28px"><use href="#pl"/></svg><svg class="ic12 dot-m" viewBox="0 0 14 14"><circle cx="7" cy="7" r="6.300" fill="#9fc8a8" stroke="#5a9a70"/><circle cx="7" cy="7" r="3" fill="#2f9a58"/></svg><span class="hl flex-grow-1">ember00 (Sniffer, ch:23)</span></div>
          </div>
          <div class="hsb d-flex align-items-center">
            <div class="sb-b sb-lh"><svg class="cx"><use href="#lft"/></svg></div>
            <div class="sb-b hthumb"><span class="small text-secondary">⁞⁞</span></div>
            <div class="flex-grow-1"></div>
            <div class="sb-b sb-lh"><svg class="cx"><use href="#rgt"/></svg></div>
          </div>
        </div>
      </section>
      <!-- radio / usb -->
      <section class="pn d-flex flex-column">
        <div class="pn-h d-flex justify-content-between">
          <div class="d-flex">
            <div class="radio-t d-flex align-items-center"><svg class="ic12"><use href="#bars"/></svg><span>Radio In</span></div>
            <div class="tab-a d-flex align-items-center ms-1"><svg class="ic16"><use href="#usb"/></svg><span>USB Lin</span><svg class="cx usb-x"><use href="#cl"/></svg></div>
            <svg class="tab-c tab-n" viewBox="0 0 34 24" preserveAspectRatio="none"><path d="M0 0C14 0 14 24 34 24H0z" fill="#f3f1e8"/><path d="M0 0C14 0 14 23.500 34 23.500" fill="none" stroke="#aca899"/></svg>
          </div>
          <div class="mm d-flex align-items-center"><i class="mn"></i><i class="mx"></i></div>
        </div>
        <div class="pn-t bord d-flex align-items-center justify-content-end">
          <svg class="ic"><use href="#gbug"/></svg><svg class="ic"><use href="#gbug"/></svg><svg class="ic"><use href="#gsw"/></svg><svg class="ic"><use href="#bulb"/></svg><svg class="ic"><use href="#penq"/></svg><svg class="ic"><use href="#pen"/></svg>
        </div>
        <div class="pn-b2"></div>
      </section>
    </div>

    <!-- centre editor -->
    <section class="cpan d-flex flex-column">
      <div class="cpan-h d-flex justify-content-between">
        <div class="d-flex">
          <div class="live d-flex align-items-center"><svg class="dome-s"><use href="#dome"/></svg><span>*Live</span><svg class="cx ms-1"><use href="#cl"/></svg><span class="ps-3"></span></div>
          <svg class="tab-c" viewBox="0 0 34 24" preserveAspectRatio="none"><path d="M0 0C14 0 14 24 34 24H0z" fill="#c9daf5"/></svg>
        </div>
        <div class="mm mm2 d-flex align-items-center"><i class="mn"></i><i class="mx"></i></div>
      </div>
      <div class="cpan-b d-flex">
        <div class="col-m d-flex flex-column">
          <!-- graph -->
          <div class="bar dn d-flex align-items-center"><span>Time:51,571273s</span><span>nodes at time:2</span><span>Pan filter:disabled</span><span class="lastm">Event:ZigBee APS transaction</span><i class="mx"></i></div>
          <div class="canv">
            <svg width="985" height="314" viewBox="264 149 985 314" font-family="Liberation Mono, monospace" font-size="14.9" fill="#222">
              <path d="M761 253l34 21M757 289l38-15" stroke="#bdbdbd" stroke-width="6.500" fill="none"/>
              <path d="M795 274L478 251" stroke="#f01010" stroke-width="5" fill="none"/>
              <path d="M514 237l-36 14 33 21" stroke="#f01010" stroke-width="5" fill="none"/>
              <circle cx="469" cy="251" r="5.500" fill="#ea1010"/>
              <circle cx="803" cy="275" r="5.500" fill="#10e010"/>
              <text x="456" y="283">0000</text><text x="456" y="299">PAN: 3733</text><text x="456" y="315">00124B000B4FB607</text>
              <text x="790" y="307">A716</text><text x="790" y="323">PAN: 3733</text><text x="790" y="339">00124B000B4FAA4C</text>
            </svg>
          </div>
          <div class="sash"></div>
          <!-- transactions -->
          <div class="dbar d-flex align-items-center"><div class="dark-t"><span>Transactions</span><span>total:12 shown:12</span></div><i class="mx"></i></div>
          <div class="gridw d-flex">
            <table class="table table-borderless gt">
              <colgroup><col style="width:22px"><col style="width:7px"><col style="width:104px"><col style="width:67px"><col style="width:273px"><col style="width:95px"><col style="width:95px"><col style="width:46px"><col style="width:43px"><col style="width:52px"><col style="width:123px"><col style="width:35px"></colgroup>
              <thead><tr><th colspan="2" class="tight"></th><th>Time</th><th>Dura...</th><th>Summary</th><th>NWK Src</th><th>NWK Dest</th><th>P#</th><th>M#</th><th class="far">E#</th><th>Status</th><th class="tight"></th></tr></thead>
              <tbody>
                <tr><td class="mk"></td><td colspan="2" class="tm">34,106440</td><td>0,010</td><td>ZCL: mfgId 0x2c5, clustId 65226 (...</td><td>0000</td><td>A716</td><td>4</td><td></td><td></td><td></td><td></td></tr>
                <tr><td class="mk"></td><td colspan="2" class="tm">34,380327</td><td>0,111</td><td>ZCL: mfgId 0x2000, clustId 65226...</td><td>A716</td><td>0000</td><td>4</td><td></td><td></td><td></td><td></td></tr>
                <tr><td class="mk"></td><td colspan="2" class="tm">40,110432</td><td>0,111</td><td>ZCL: mfgId 0x2001, clustId 65226...</td><td>A716</td><td>0000</td><td>4</td><td></td><td></td><td></td><td></td></tr>
                <tr><td class="mk"></td><td colspan="2" class="tm">45,840462</td><td>0,112</td><td>ZCL: mfgId 0x2002, clustId 65226...</td><td>A716</td><td>0000</td><td>4</td><td></td><td></td><td></td><td></td></tr>
                <tr class="sel"><td class="mk"><svg class="mk-i"><use href="#bMid"/></svg></td><td colspan="2" class="tm">51,571273</td><td>0,112</td><td>ZCL: mfgId 0x2003, clustId 65226...</td><td>A716</td><td>0000</td><td>4</td><td></td><td></td><td></td><td class="clr"></td></tr>
                <tr><td class="mk"></td><td colspan="2" class="tm">57,303946</td><td>0,112</td><td>ZCL: mfgId 0x2004, clustId 65226...</td><td>A716</td><td>0000</td><td>4</td><td></td><td></td><td></td><td></td></tr>
                <tr><td class="mk"></td><td colspan="2" class="tm">63,035175</td><td>0,111</td><td>ZCL: mfgId 0x2005, clustId 65226...</td><td>A716</td><td>0000</td><td>4</td><td></td><td></td><td></td><td></td></tr>
                <tr><td class="mk"></td><td colspan="2" class="tm">68,766785</td><td>0,114</td><td>ZCL: mfgId 0x2006, clustId 65226...</td><td>A716</td><td>0000</td><td>4</td><td></td><td></td><td></td><td></td></tr>
                <tr><td class="mk"></td><td colspan="2" class="tm">74,500069</td><td>0,112</td><td>ZCL: mfgId 0x2007, clustId 65226...</td><td>A716</td><td>0000</td><td>4</td><td></td><td></td><td></td><td></td></tr>
                <tr><td class="mk"></td><td colspan="2" class="tm">80,232243</td><td>0,114</td><td>ZCL: mfgId 0x2008, clustId 65226...</td><td>A716</td><td>0000</td><td>4</td><td></td><td></td><td></td><td></td></tr>
              </tbody>
            </table>
            <div class="vsb d-flex flex-column">
              <div class="sb-b vsb-up"><svg class="cx"><use href="#upa"/></svg></div>
              <div class="sb-b vth"><span class="small text-secondary">≡</span></div>
              <div class="sb-b vsb-dn"><svg class="cx"><use href="#dna"/></svg></div>
            </div>
          </div>
          <div class="sash"></div>
          <!-- events -->
          <div class="bar d-flex align-items-center"><span>Events</span><span>total:204 shown:204</span><span>Decoders: EmberZNet 4.3</span><i class="mx"></i></div>
          <div class="gridw d-flex border-0">
            <table class="table table-borderless gt">
              <colgroup><col style="width:22px"><col style="width:7px"><col style="width:95px"><col style="width:95px"><col style="width:356px"><col style="width:86px"><col style="width:87px"><col style="width:209px"><col style="width:5px"></colgroup>
              <thead><tr><th colspan="2" class="tight"></th><th>Time</th><th>Type</th><th>Summary</th><th>MAC Src</th><th>MAC Dest</th><th>Status</th><th class="tight"></th></tr></thead>
              <tbody>
                <tr class="hi"><td class="mk"><svg class="mk-i"><use href="#bTop"/></svg></td><td colspan="2" class="tm">51,571273</td><td class="nar">Packet</td><td>ZCL: mfgId 0x2003, clustId 65226 (0xfeca), c...</td><td>A716</td><td>0000</td><td></td><td></td></tr>
                <tr><td class="mk"><svg class="mk-i"><use href="#bMid"/></svg></td><td colspan="2" class="tm">51,573673</td><td class="nar">Packet</td><td>802.15.4 Ack</td><td>0000</td><td>A716</td><td></td><td></td></tr>
                <tr><td class="mk"><svg class="mk-l"><use href="#link"/></svg></td><td colspan="2" class="tm">51,676114</td><td class="nar">Packet</td><td>Data Request</td><td>A716</td><td>0000</td><td></td><td></td></tr>
                <tr><td class="mk"><svg class="mk-l"><use href="#link"/></svg></td><td colspan="2" class="tm">51,676882</td><td class="nar">Packet</td><td>802.15.4 Ack</td><td>0000</td><td>A716</td><td></td><td></td></tr>
                <tr><td class="mk"><svg class="mk-i"><use href="#bMid"/></svg></td><td colspan="2" class="tm">51,682002</td><td class="nar">Packet</td><td>APS Ack</td><td>0000</td><td>A716</td><td></td><td></td></tr>
                <tr><td class="mk"><svg class="mk-i"><use href="#bBot"/></svg></td><td colspan="2" class="tm">51,683250</td><td class="nar">Packet</td><td>802.15.4 Ack</td><td>A716</td><td>0000</td><td></td><td></td></tr>
                <tr><td class="mk"></td><td colspan="2" class="tm">51,787999</td><td class="nar">Packet</td><td>Data Request</td><td>A716</td><td>0000</td><td></td><td></td></tr>
                <tr><td class="mk"></td><td colspan="2" class="tm">51,788767</td><td class="nar">Packet</td><td>802.15.4 Ack</td><td>0000</td><td>A716</td><td></td><td></td></tr>
                <tr><td class="mk"></td><td colspan="2" class="tm">52,793350</td><td class="nar">Packet</td><td>Data Request</td><td>A716</td><td>0000</td><td></td><td></td></tr>
                <tr><td class="mk"></td><td colspan="2" class="tm">52,794118</td><td class="nar">Packet</td><td>802.15.4 Ack</td><td>0000</td><td>A716</td><td></td><td></td></tr>
              </tbody>
            </table>
            <div class="vsb d-flex flex-column">
              <div class="sb-b vsb-up"><svg class="cx"><use href="#upa"/></svg></div>
              <div class="sb-b vth2"></div>
              <div class="sb-b vsb-dn"><svg class="cx"><use href="#dna"/></svg></div>
            </div>
          </div>
        </div>

        <!-- right column -->
        <div class="col-r d-flex flex-column">
          <div class="dt-h d-flex align-items-center"><svg class="ic16"><use href="#pin"/></svg><span>Event Detail</span><i class="tick"></i></div>
          <div class="dt-list">
            <svg class="dt-lines" width="60" height="458" fill="none" stroke="#8a8a80" stroke-dasharray="1 1"><path d="M15.500 12V116M16 12h10M16 34h10M16 56h10M16 78h10M16 100h10M16 122h10"/><path d="M37.500 122V364M38 144h10M38 166h10M38 188h10M38 210h11M38 232h11M38 254h11M38 276h11M38 298h11M38 320h11M38 342h11M38 364h11"/></svg>
            <div class="dt-r l1x"><svg class="exp position-relative"><use href="#pl"/></svg><span class="ms-2">IEEE 802.15.4</span></div>
            <div class="dt-r l1x"><svg class="exp position-relative"><use href="#pl"/></svg><span class="ms-2">ZigBee Network</span></div>
            <div class="dt-r l1x"><svg class="exp position-relative"><use href="#pl"/></svg><span class="ms-2">ZigBee Application Support</span></div>
            <div class="dt-r l1x"><svg class="exp position-relative"><use href="#pl"/></svg><span class="ms-2">ZigBee Cluster Library</span></div>
            <div class="dt-r l1">Application Payload</div>
            <div class="dt-r l1x"><svg class="exp position-relative"><use href="#mi"/></svg><span class="ms-2">Radio Info EM250</span></div>
            <div class="dt-r l2">CRC: 0x96D5</div>
            <div class="dt-r l2">Raw LQI: 0x00</div>
            <div class="dt-r l2">RSSI: -43 dBm (0x6F)</div>
            <div class="dt-r l2">Status: 0x12</div>
            <div class="dt-r l3">Tx Stomped: false</div>
            <div class="dt-r l3">Baseband dropped: false</div>
            <div class="dt-r l3">Wrong format: false</div>
            <div class="dt-r l3">Wrong address: true</div>
            <div class="dt-r l3">Filtered packet: false</div>
            <div class="dt-r l3">Rx overflow: false</div>
            <div class="dt-r l3">CRC Pass: true</div>
            <div class="dt-r l3">Tx Packet: false</div>
            <div class="dt-r"></div><div class="dt-r"></div><div class="dt-r"></div>
          </div>
          <div class="sash"></div>
          <div class="hex-h d-flex align-items-center"><span>Hex Dump</span><i class="tick"></i></div>
          <div class="hex-b d-flex flex-column">
            <div class="d-flex flex-grow-1 overflow-hidden">
<pre class="hex flex-grow-1">3F 61 88 AC   ?a..
33 37 00 00   37..
16 A7 48 00   ..H.
00 00 16 A7   ....
07 EA 40 0A   ..@.
CA FE 04 0F   ....
0A 05 6D 03   ..m.
20 09 00 00   ....
00 00 00 00   ....
00 00 00 00   ....
00 00 00 00   ....
00 00 00 00   ....
00 00 00 00   ....
00 00 00 00   ....
00 00 00 00   ....
00 00 D5 96   ....
00 6F 12      .o.</pre>
              <div class="hex-vs"></div>
            </div>
            <div class="hs2 d-flex align-items-center justify-content-between">
              <div class="sb-b sb-off"><svg class="cx"><use href="#lft"/></svg></div>
              <div class="sb-b sb-off"><svg class="cx"><use href="#rgt"/></svg></div>
            </div>
          </div>
        </div>
      </div>
    </section>

    <!-- right trim -->
    <aside class="trim d-flex flex-column align-items-center">
      <div class="dots"></div>
      <svg class="ic12 mt-2"><use href="#rst"/></svg>
      <svg class="tr22"><use href="#info"/></svg>
    </aside>
  </div>

  <!-- status -->
  <div class="stat d-flex align-items-start">
    <div class="gr"></div>
    <svg class="ic16 ms-2 mt-1"><use href="#fv"/></svg>
    <div class="err">Datagram send error.</div>
    <div class="gr"></div>
    <div class="trim2 d-flex align-items-center">
      <div class="gr"></div>
      <svg class="ic12 ms-1"><use href="#rst"/></svg>
      <svg class="ic"><use href="#stq"/></svg>
    </div>
  </div>

  <!-- taskbar -->
  <div class="task d-flex">
    <div class="start d-flex align-items-center"><svg class="tr22"><use href="#flag"/></svg><span class="start-t">пуск</span></div>
    <div class="tgrip"></div>
    <div class="tbtn d-flex align-items-center"><svg class="dome-l"><use href="#dome"/></svg><span>InSight Deskt...</span></div>
    <div class="tgrip2"></div>
    <div class="lang">EN</div>
    <div class="tray d-flex align-items-center">
      <svg class="tr22"><use href="#book"/></svg>
      <svg class="tr22"><use href="#note"/></svg>
      <svg class="tr20"><use href="#mask"/></svg>
      <svg class="tr20 ms-1"><use href="#warn"/></svg>
      <svg class="tr20"><use href="#spk"/></svg>
      <span class="clk">20:24</span>
    </div>
  </div>
</div>
<script src="https://cdn.jsdelivr.net/npm/bootstrap@5.3.0/dist/js/bootstrap.bundle.min.js"></script>
</body>
</html>
